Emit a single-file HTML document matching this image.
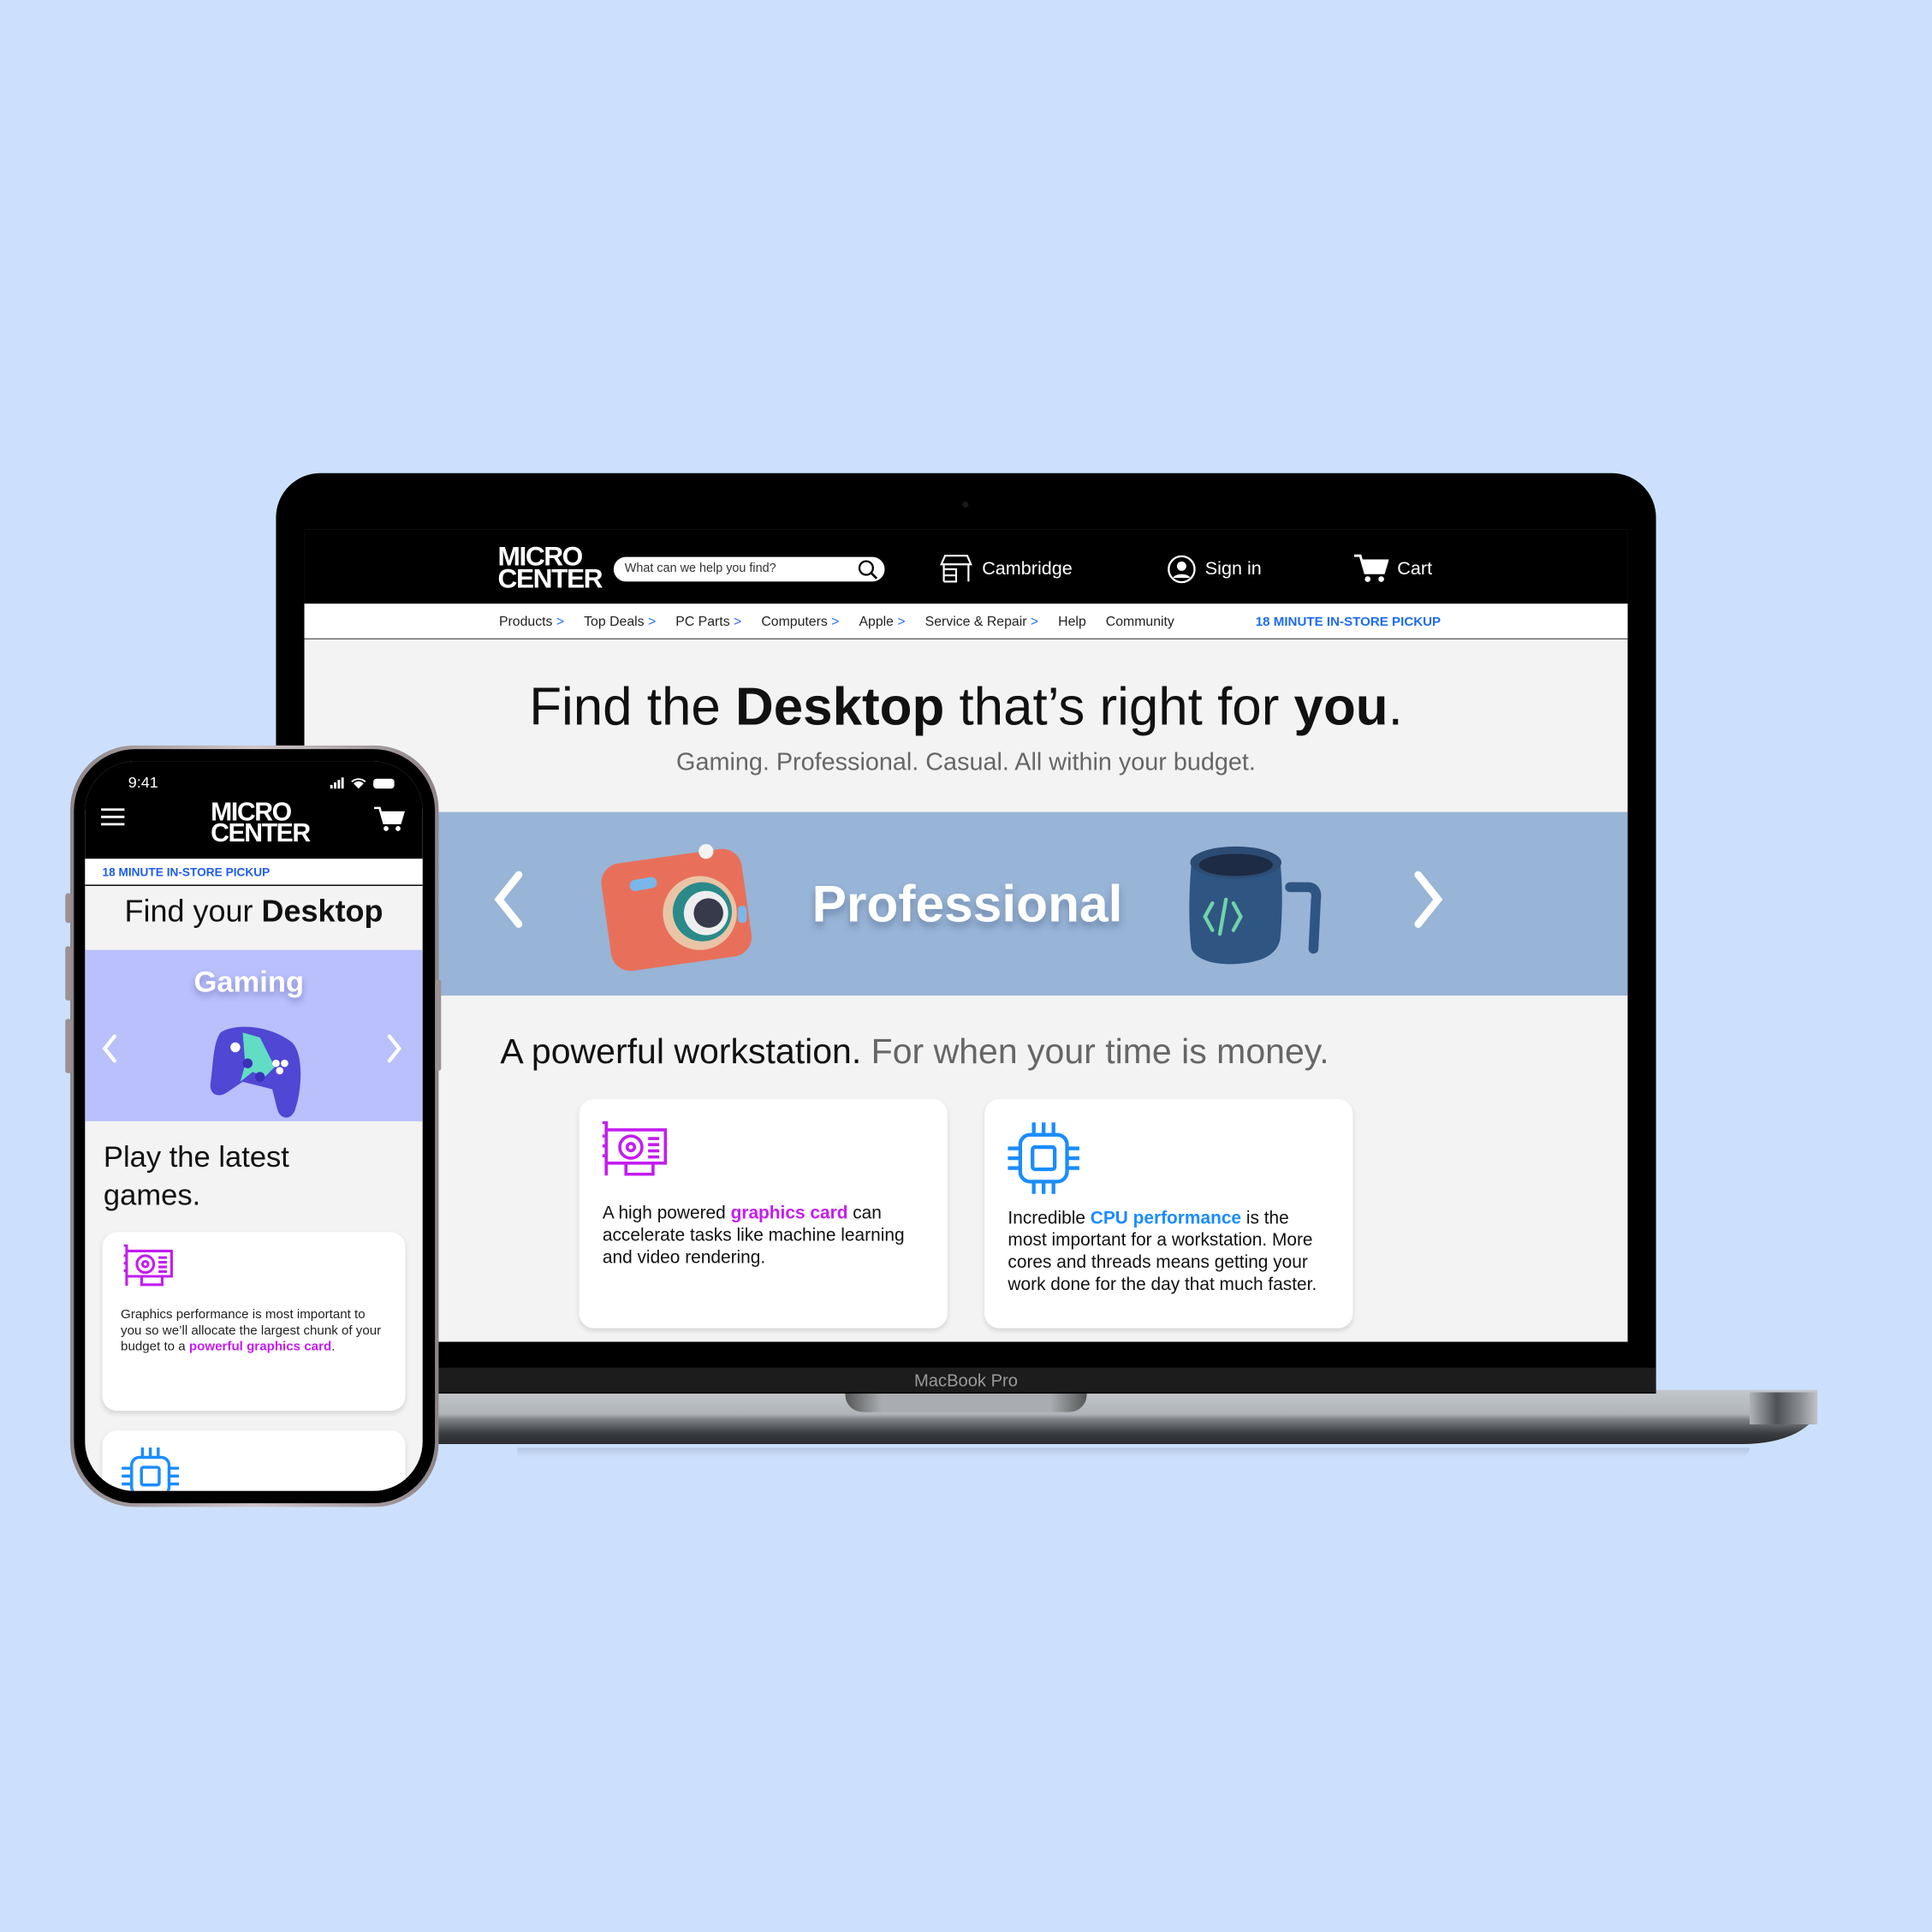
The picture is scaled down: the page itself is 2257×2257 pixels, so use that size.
<!DOCTYPE html>
<html><head><meta charset="utf-8"><style>
*{margin:0;padding:0;box-sizing:border-box}
html,body{width:2257px;height:2257px;overflow:hidden;background:#cce0fd;font-family:"Liberation Sans",sans-serif}
#w{position:absolute;left:0;top:0;width:1568px;height:1568px;transform:scale(1.43941);transform-origin:0 0;background:#cce0fd}
.a{position:absolute}
.logo{font-family:"Liberation Sans Narrow","Liberation Sans",sans-serif;font-weight:bold;color:#fff;line-height:.82;letter-spacing:-1px}
.nav span{margin-right:16px}
.nav b{color:#2a6ef0;font-weight:normal}
.card{background:#fff;border-radius:12px;box-shadow:0 2px 4px rgba(0,0,0,.12)}
</style></head><body><div id="w">

<div class="a" style="left:300px;top:1128px;width:1175px;height:44px;border-radius:0 0 60px 0/0 0 30px 0;background:linear-gradient(#c3c8cc 0,#b0b4b8 45%,#7c8084 55%,#3a3d41 80%,#2a2c2f 100%)"></div>
<div class="a" style="left:1420px;top:1130px;width:55px;height:26px;background:linear-gradient(90deg,#b0b4b8,#4e5256 40%,#8a8e92 75%,#c0c4c8)"></div>
<div class="a" style="left:686px;top:1130px;width:196px;height:16px;border-radius:0 0 14px 14px;background:linear-gradient(90deg,#555 0,#a9adb1 15%,#a9adb1 85%,#555)"></div>
<div class="a" style="left:420px;top:1175px;width:1000px;height:8px;background:linear-gradient(#b6c8e2,#cce0fd);border-radius:0 0 40px 0"></div>

<div class="a" style="left:224px;top:384px;width:1120px;height:747px;background:#000;border-radius:36px 36px 0 0"></div>
<div class="a" style="left:224px;top:1110px;width:1120px;height:20px;background:#1c1c1c;color:#9a9a9a;font-size:14px;text-align:center;line-height:20px">MacBook Pro</div>
<div class="a" style="left:781px;top:407px;width:5px;height:5px;border-radius:50%;background:#1a1a1a"></div>

<div class="a" style="left:247px;top:430px;width:1074px;height:659px;background:#f3f3f3;overflow:hidden">
  <div class="a" style="left:0;top:0;width:1074px;height:60px;background:#000"></div>
  <div class="a logo" style="left:157px;top:13px;font-size:22px">MICRO<br>CENTER</div>
  <div class="a" style="left:251px;top:22px;width:220px;height:20px;background:#fff;border-radius:10px;font-size:10px;color:#333;padding:4px 9px">What can we help you find?</div>
  <svg class="a" style="left:449px;top:24px" width="17" height="17" viewBox="0 0 17 17"><circle cx="7" cy="7" r="5.5" fill="none" stroke="#000" stroke-width="1.6"/><path d="M11 11l4.5 4.5" stroke="#000" stroke-width="1.8"/></svg>
  <svg class="a" style="left:515px;top:19px" width="28" height="24" viewBox="0 0 28 24" fill="none" stroke="#fff" stroke-width="1.5"><path d="M5 2h18l3 7H2z"/><path d="M4 9v14M24 9v14M4 23h10V13H4M4 18h10"/></svg>
  <div class="a" style="left:550px;top:23px;color:#fff;font-size:15px">Cambridge</div>
  <svg class="a" style="left:700px;top:20px" width="24" height="24" viewBox="0 0 24 24"><circle cx="12" cy="12" r="10.5" fill="none" stroke="#fff" stroke-width="1.6"/><circle cx="12" cy="9.5" r="3.8" fill="#fff"/><path d="M5 19c2-4 12-4 14 0" fill="#fff"/></svg>
  <div class="a" style="left:731px;top:23px;color:#fff;font-size:15px">Sign in</div>
  <svg class="a" style="left:852px;top:19px" width="28" height="25" viewBox="0 0 28 25" fill="#fff"><path d="M0 2h5l4 14h15l3-10H7" fill="none" stroke="#fff" stroke-width="2"/><path d="M7 6h20l-3 10H10z"/><circle cx="11" cy="21" r="2.3"/><circle cx="22" cy="21" r="2.3"/></svg>
  <div class="a" style="left:887px;top:23px;color:#fff;font-size:15px">Cart</div>
  <div class="a" style="left:0;top:60px;width:1074px;height:29px;background:#fff;border-bottom:1px solid #666"></div>
  <div class="a nav" style="left:158px;top:69px;font-size:11px;color:#222;white-space:nowrap"><span>Products <b>&gt;</b></span><span>Top Deals <b>&gt;</b></span><span>PC Parts <b>&gt;</b></span><span>Computers <b>&gt;</b></span><span>Apple <b>&gt;</b></span><span>Service &amp; Repair <b>&gt;</b></span><span>Help</span><span>Community</span></div>
  <div class="a" style="left:772px;top:69px;font-size:10.5px;color:#1d6cf0;font-weight:bold">18 MINUTE IN-STORE PICKUP</div>
  <div class="a" style="left:0;top:120px;width:1074px;text-align:center;font-size:43px;color:#111">Find the <b>Desktop</b> that’s right for <b>you</b>.</div>
  <div class="a" style="left:0;top:178px;width:1074px;text-align:center;font-size:20px;color:#666">Gaming. Professional. Casual. All within your budget.</div>
  <div class="a" style="left:0;top:229px;width:1074px;height:149px;background:#98b4d6"></div>
  <svg class="a" style="left:150px;top:275px" width="30" height="50" viewBox="0 0 30 50"><path d="M24 5L8 25l16 20" fill="none" stroke="#fff" stroke-width="6" stroke-linecap="round"/></svg>
  <svg class="a" style="left:898px;top:275px" width="30" height="50" viewBox="0 0 30 50"><path d="M6 5l16 20L6 45" fill="none" stroke="#fff" stroke-width="6" stroke-linecap="round"/></svg>
  <svg class="a" style="left:238px;top:245px" width="130" height="115" viewBox="0 0 130 115"><rect x="6" y="20" width="115" height="88" rx="16" fill="#e8705a" transform="rotate(-8 60 60)"/><circle cx="88" cy="16" r="6" fill="#f3f3f3"/><circle cx="83" cy="66" r="30" fill="#e9c4a6"/><circle cx="85" cy="65" r="24" fill="#2a8a8a"/><circle cx="88" cy="66" r="18" fill="#eee"/><circle cx="90" cy="66" r="12" fill="#363a4a"/><rect x="26" y="38" width="22" height="9" rx="4" fill="#7ab6ea" transform="rotate(-10 37 42)"/><rect x="114" y="60" width="7" height="14" rx="3" fill="#7ab6ea"/></svg>
  <div class="a" style="left:412px;top:280px;font-size:42px;font-weight:bold;color:#fff;text-shadow:0 4px 6px rgba(40,60,100,.35)">Professional</div>
  <svg class="a" style="left:712px;top:252px" width="120" height="105" viewBox="0 0 120 105"><path d="M88 38h14c6 0 8 4 7 10l-2 40" fill="none" stroke="#2f5582" stroke-width="8" stroke-linecap="round"/><path d="M8 18c0 0-4 40 0 70 4 10 22 14 40 12 22-2 30-10 32-20 2-20 2-46 0-62z" fill="#2f5582"/><ellipse cx="44" cy="18" rx="37" ry="13" fill="#2c4c74"/><ellipse cx="44" cy="20" rx="30" ry="9" fill="#1d2b44"/><path d="M25 51l-6 11 6 11M36 48l-5 28M42 51l6 11-6 11" fill="none" stroke="#6fd3a8" stroke-width="3" stroke-linecap="round"/></svg>
  <div class="a" style="left:159px;top:408px;font-size:28.5px;color:#111;white-space:nowrap">A powerful workstation. <span style="color:#666">For when your time is money.</span></div>
  <div class="a card" style="left:223px;top:462px;width:299px;height:186px"></div>
  <div class="a card" style="left:552px;top:462px;width:299px;height:186px"></div>
  <svg class="a" style="left:241px;top:480px" width="56" height="50" viewBox="0 0 56 50" fill="none" stroke="#c41cf0" stroke-width="2.5"><path d="M1 1h3v6h48v27H4v10M4 7v33M1 12h3M1 20h3M1 28h3M20 34v9h22v-9"/><circle cx="24" cy="21" r="9"/><circle cx="24" cy="21" r="3"/><path d="M38 14h9M38 19h9M38 24h9M38 29h9"/></svg>
  <div class="a" style="left:242px;top:546px;font-size:14.5px;line-height:18px;color:#111;width:250px">A high powered <b style="color:#c41cf0">graphics card</b> can accelerate tasks like machine learning and video rendering.</div>
  <svg class="a" style="left:570px;top:480px" width="60" height="60" viewBox="0 0 60 60" fill="none" stroke="#1a8cff" stroke-width="3"><rect x="11" y="11" width="38" height="38" rx="8"/><rect x="21" y="21" width="18" height="18" rx="2"/><path d="M22 1v10M30 1v10M38 1v10M22 49v10M30 49v10M38 49v10M1 22h10M1 30h10M1 38h10M49 22h10M49 30h10M49 38h10"/></svg>
  <div class="a" style="left:571px;top:550px;font-size:14.5px;line-height:18px;color:#111;width:252px">Incredible <b style="color:#1a8cff">CPU performance</b> is the most important for a workstation. More cores and threads means getting your work done for the day that much faster.</div>
</div>

<div class="a" style="left:57px;top:605px;width:299px;height:618px;border-radius:52px;background:linear-gradient(90deg,#8e8488,#cfc6ca 50%,#8e8488);"></div>
<div class="a" style="left:53px;top:725px;width:5px;height:24px;background:#9a9194;border-radius:2px"></div>
<div class="a" style="left:53px;top:768px;width:5px;height:44px;background:#9a9194;border-radius:2px"></div>
<div class="a" style="left:53px;top:827px;width:5px;height:44px;background:#9a9194;border-radius:2px"></div>
<div class="a" style="left:353px;top:795px;width:5px;height:74px;background:#9a9194;border-radius:2px"></div>
<div class="a" style="left:60px;top:608px;width:293px;height:612px;border-radius:50px;background:#000"></div>
<div class="a" style="left:69px;top:618px;width:274px;height:592px;border-radius:40px;background:#f3f3f3;overflow:hidden">
  <div class="a" style="left:0;top:0;width:274px;height:79px;background:#000"></div>
  <div class="a" style="left:35px;top:10px;color:#fff;font-size:12.5px">9:41</div>
  <svg class="a" style="left:198px;top:11px" width="60" height="12" viewBox="0 0 60 12" fill="#fff"><rect x="1" y="8" width="2" height="3"/><rect x="4" y="6" width="2" height="5"/><rect x="7" y="4" width="2" height="7"/><rect x="10" y="2" width="2" height="9"/><path d="M18 5a9 9 0 0 1 12 0l-1 1a7 7 0 0 0-10 0zM20 7a5 5 0 0 1 8 0l-4 4z"/><rect x="36" y="3" width="17" height="8" rx="2.5"/></svg>
  <svg class="a" style="left:13px;top:38px" width="20" height="14"><path d="M0 1h19M0 7h19M0 13h19" stroke="#fff" stroke-width="2"/></svg>
  <div class="a logo" style="left:102px;top:33px;font-size:21px">MICRO<br>CENTER</div>
  <svg class="a" style="left:234px;top:36px" width="26" height="22" viewBox="0 0 28 25" fill="#fff"><path d="M0 2h5l4 14h15l3-10H7" fill="none" stroke="#fff" stroke-width="2"/><path d="M7 6h20l-3 10H10z"/><circle cx="11" cy="21" r="2.3"/><circle cx="22" cy="21" r="2.3"/></svg>
  <div class="a" style="left:0;top:79px;width:274px;height:22px;background:#fff;border-bottom:1px solid #000"></div>
  <div class="a" style="left:14px;top:85px;font-size:9.5px;font-weight:bold;color:#1d5cf0">18 MINUTE IN-STORE PICKUP</div>
  <div class="a" style="left:0;top:108px;width:274px;text-align:center;font-size:25px;color:#111">Find your <b>Desktop</b></div>
  <div class="a" style="left:0;top:153px;width:274px;height:139px;background:#b9c0fb"></div>
  <div class="a" style="left:0;top:166px;width:266px;text-align:center;font-size:24px;font-weight:bold;color:#fff;text-shadow:0 3px 5px rgba(60,60,140,.4)">Gaming</div>
  <svg class="a" style="left:12px;top:220px" width="16" height="26"><path d="M12 3L4 13l8 10" fill="none" stroke="#fff" stroke-width="3" stroke-linecap="round"/></svg>
  <svg class="a" style="left:243px;top:220px" width="16" height="26"><path d="M4 3l8 10-8 10" fill="none" stroke="#fff" stroke-width="3" stroke-linecap="round"/></svg>
  <svg class="a" style="left:100px;top:210px" width="78" height="82" viewBox="0 0 78 82"><path d="M10 10c12-8 40-6 58 8 10 10 8 40 2 56-4 8-12 6-14-2l-4-16-24-6-12 8c-8 6-16 2-14-8 2-14 2-32 8-40z" fill="#5047d4"/><path d="M28 10l14 4 12 24-8 8-10-4-10 8 4-14z" fill="#62dcc4"/><circle cx="22" cy="22" r="4" fill="#fff"/><circle cx="55" cy="35" r="3" fill="#fff"/><circle cx="62" cy="35" r="3" fill="#fff"/><circle cx="58" cy="41" r="3" fill="#fff"/><circle cx="32" cy="35" r="4" fill="#3a30b8"/><circle cx="42" cy="46" r="4" fill="#3a30b8"/></svg>
  <div class="a" style="left:15px;top:306px;font-size:24px;line-height:31px;color:#111">Play the latest<br>games.</div>
  <div class="a card" style="left:14px;top:382px;width:246px;height:145px"></div>
  <svg class="a" style="left:29px;top:392px" width="46" height="38" viewBox="0 0 56 50" fill="none" stroke="#c41cf0" stroke-width="2.8"><path d="M1 1h3v6h48v27H4v10M4 7v33M1 12h3M1 20h3M1 28h3M20 34v9h22v-9"/><circle cx="24" cy="21" r="9"/><circle cx="24" cy="21" r="3"/><path d="M38 14h9M38 19h9M38 24h9M38 29h9"/></svg>
  <div class="a" style="left:29px;top:443px;font-size:10.5px;line-height:13px;color:#222;width:214px">Graphics performance is most important to you so we’ll allocate the largest chunk of your budget to a <b style="color:#c41cf0">powerful graphics card</b>.</div>
  <div class="a card" style="left:14px;top:543px;width:246px;height:80px"></div>
  <svg class="a" style="left:29px;top:556px" width="48" height="48" viewBox="0 0 60 60" fill="none" stroke="#1a8cff" stroke-width="3"><rect x="11" y="11" width="38" height="38" rx="8"/><rect x="21" y="21" width="18" height="18" rx="2"/><path d="M22 1v10M30 1v10M38 1v10M1 22h10M1 30h10M1 38h10M49 22h10M49 30h10M49 38h10"/></svg>
</div>
<div class="a" style="left:165px;top:626px;width:84px;height:10px;border-radius:5px;background:#000"></div>
</div></body></html>
